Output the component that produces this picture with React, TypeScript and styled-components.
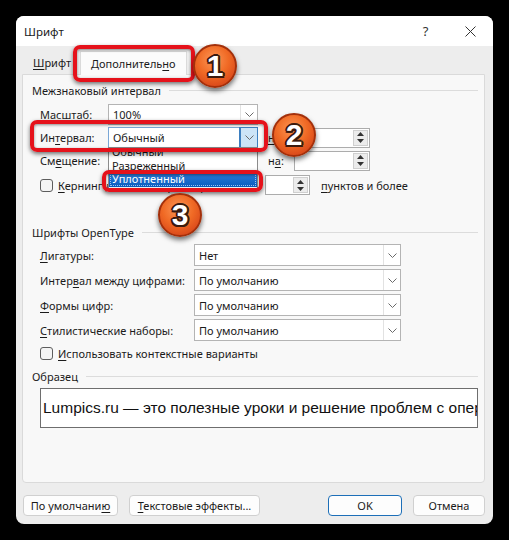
import React from 'react';
import styled, { createGlobalStyle } from 'styled-components';

const Global = createGlobalStyle`
  html, body { margin: 0; padding: 0; background: #000; }
  body { font-family: 'Noto Sans', 'Open Sans', sans-serif; }
  #root { width: 509px; height: 540px; }
`;

const Page = styled.div`
  width: 509px;
  height: 540px;
  box-sizing: border-box;
  padding: 16px;
  background: #000;
`;

const Dialog = styled.div`
  position: relative;
  width: 477px;
  height: 508px;
  background: #ededed;
  border-radius: 8px;
  overflow: hidden;
  display: flex;
  flex-direction: column;
  font-size: 11px;
  color: #1b1b1b;
`;

const TitleBar = styled.div`
  height: 30px;
  flex: none;
  background: #fff;
  display: flex;
  align-items: center;
  padding-left: 8px;
`;

const Title = styled.div`
  flex: 1;
  font-size: 11.5px;
`;

const TitleButton = styled.div`
  width: 45px;
  height: 30px;
  display: flex;
  align-items: center;
  justify-content: center;
  font-size: 13px;
  color: #333;
`;

const TabStrip = styled.div`
  height: 28px;
  flex: none;
  display: flex;
  align-items: flex-end;
  padding-left: 10px;
  gap: 2px;
  position: relative;
  z-index: 1;
`;

const Tab = styled.div<{ $active?: boolean }>`
  height: ${(p) => (p.$active ? 23 : 20)}px;
  padding: 0 ${(p) => (p.$active ? 10 : 6)}px;
  display: flex;
  align-items: center;
  background: ${(p) => (p.$active ? '#fbfbfb' : 'transparent')};
  border: ${(p) => (p.$active ? '1px solid #dadada' : '1px solid transparent')};
  border-bottom: none;
  margin-bottom: ${(p) => (p.$active ? -1 : 2)}px;
`;

const Acc = styled.span`
  text-decoration: underline;
  text-underline-offset: 2px;
`;

const Panel = styled.div`
  box-sizing: border-box;
  height: 409px;
  flex: none;
  margin: 0 8px 0 6px;
  background: #f8f8f8;
  border: 1px solid #dadada;
  border-radius: 0 0 4px 4px;
  padding: 7px 6px 0 9px;
  display: flex;
  flex-direction: column;
`;

const GroupHeader = styled.div<{ $mt?: number }>`
  display: flex;
  align-items: center;
  gap: 8px;
  height: 16px;
  margin-top: ${(p) => p.$mt ?? 0}px;
  &::after {
    content: '';
    flex: 1;
    height: 1px;
    background: #dcdcdc;
  }
`;

const Rows = styled.div<{ $mt: number; $gap: number }>`
  display: flex;
  flex-direction: column;
  gap: ${(p) => p.$gap}px;
  margin-top: ${(p) => p.$mt}px;
  padding-left: 8px;
`;

const Row = styled.div<{ $h: number }>`
  display: flex;
  align-items: center;
  height: ${(p) => p.$h}px;
`;

const Label = styled.div<{ $w: number; $ml?: number }>`
  width: ${(p) => p.$w}px;
  margin-left: ${(p) => p.$ml ?? 0}px;
  flex: none;
  white-space: nowrap;
`;

const ComboBox = styled.div<{ $w: number; $h: number; $focus?: boolean }>`
  position: relative;
  box-sizing: border-box;
  width: ${(p) => p.$w}px;
  height: ${(p) => p.$h}px;
  flex: none;
  background: #fff;
  border: 1px solid ${(p) => (p.$focus ? '#7aa7d6' : '#b4b4b4')};
  display: flex;
  align-items: center;
`;

const ComboValue = styled.div`
  flex: 1;
  padding-left: 4px;
  white-space: nowrap;
  overflow: hidden;
`;

const ComboArrow = styled.div<{ $focus?: boolean }>`
  box-sizing: border-box;
  width: 17px;
  height: 100%;
  display: flex;
  align-items: center;
  justify-content: center;
  background: ${(p) => (p.$focus ? '#cce4f7' : '#fff')};
  border-left: 1px solid ${(p) => (p.$focus ? '#3d7fc0' : '#e2e2e2')};
  outline: ${(p) => (p.$focus ? '1px solid #3d7fc0' : 'none')};
`;

const DropList = styled.div`
  position: absolute;
  top: 100%;
  left: -1px;
  right: -1px;
  height: 42px;
  box-sizing: border-box;
  background: #fff;
  border: 1px solid #8c8c8c;
  overflow: hidden;
  z-index: 3;
`;

const DropItem = styled.div<{ $h: number; $mt?: number; $sel?: boolean }>`
  height: ${(p) => p.$h}px;
  margin-top: ${(p) => p.$mt ?? 0}px;
  line-height: 14px;
  padding-left: 3px;
  overflow: hidden;
  white-space: nowrap;
  color: ${(p) => (p.$sel ? '#fff' : '#1b1b1b')};
  background: ${(p) => (p.$sel ? 'linear-gradient(#2f7fd8, #0a5cbf)' : 'transparent')};
  outline: ${(p) => (p.$sel ? '1px dotted #9cc3ee' : 'none')};
  outline-offset: -2px;
  display: flex;
  align-items: ${(p) => (p.$sel ? 'center' : 'flex-start')};
`;

const Spin = styled.div<{ $w: number }>`
  box-sizing: border-box;
  width: ${(p) => p.$w}px;
  height: 20px;
  flex: none;
  background: #fff;
  border: 1px solid #acacac;
  display: flex;
  justify-content: flex-end;
  padding: 1px;
`;

const SpinButtons = styled.div`
  width: 13px;
  display: flex;
  flex-direction: column;
  border: 1px solid #cfcfcf;
  background: #ececec;
`;

const SpinHalf = styled.div`
  flex: 1;
  display: flex;
  align-items: center;
  justify-content: center;
`;

const Check = styled.div`
  box-sizing: border-box;
  width: 13px;
  height: 13px;
  flex: none;
  border: 1px solid #5d5d5d;
  border-radius: 3px;
  background: #f4f4f4;
  margin-right: 5px;
`;

const Sample = styled.div`
  box-sizing: border-box;
  margin: 4px 0 0 8px;
  width: 438px;
  height: 40px;
  background: #fff;
  border: 1px solid #6e6e6e;
  display: flex;
  align-items: center;
  padding-left: 2px;
  overflow: hidden;
  white-space: nowrap;
  font-family: 'Liberation Sans', Arial, sans-serif;
  font-size: 15.5px;
  color: #111;
`;

const Footer = styled.div`
  flex: 1;
  display: flex;
  align-items: flex-start;
  padding: 12px 8px 0 7px;
  gap: 11px;
`;

const Button = styled.div<{ $w: number; $primary?: boolean; $push?: boolean }>`
  box-sizing: border-box;
  width: ${(p) => p.$w}px;
  height: 21px;
  display: flex;
  align-items: center;
  justify-content: center;
  background: #fdfdfd;
  border: 1px solid ${(p) => (p.$primary ? '#1d6fb8' : '#d0d0d0')};
  border-radius: 4px;
  margin-left: ${(p) => (p.$push ? 'auto' : '0')};
  white-space: nowrap;
`;

const Highlight = styled.div<{ $x: number; $y: number; $w: number; $h: number }>`
  position: absolute;
  left: ${(p) => p.$x}px;
  top: ${(p) => p.$y}px;
  width: ${(p) => p.$w}px;
  height: ${(p) => p.$h}px;
  box-sizing: border-box;
  border: 4px solid #e5121b;
  border-radius: 7px;
  box-shadow: 0 2px 4px rgba(0, 0, 0, 0.55), inset 0 1px 3px rgba(0, 0, 0, 0.45);
  z-index: 5;
  pointer-events: none;
`;

const Badge = styled.div<{ $x: number; $y: number }>`
  position: absolute;
  left: ${(p) => p.$x}px;
  top: ${(p) => p.$y}px;
  width: 44px;
  height: 44px;
  box-sizing: border-box;
  border-radius: 50%;
  border: 2px solid #a3300b;
  background: radial-gradient(circle at 45% 35%, #fb9656 0%, #f06a25 45%, #d9481a 80%, #b8360f 100%);
  box-shadow: 0 3px 5px rgba(0, 0, 0, 0.55);
  display: flex;
  align-items: center;
  justify-content: center;
  font-family: 'Liberation Sans', Arial, sans-serif;
  font-weight: 700;
  font-size: 30px;
  color: #fff;
  text-shadow: -2px 0 0 #3b1a0e, 2px 0 0 #3b1a0e, 0 -2px 0 #3b1a0e, 0 2px 0 #3b1a0e,
    -1.5px -1.5px 0 #3b1a0e, 1.5px 1.5px 0 #3b1a0e, -1.5px 1.5px 0 #3b1a0e, 1.5px -1.5px 0 #3b1a0e;
  z-index: 6;
`;

const Chevron = () => (
  <svg width="9" height="5" viewBox="0 0 9 5">
    <polyline points="0.5,0.5 4.5,4.5 8.5,0.5" fill="none" stroke="#6a6a6a" strokeWidth="1" />
  </svg>
);

const Tri = ({ up }: { up?: boolean }) => (
  <svg width="7" height="4" viewBox="0 0 7 4">
    <polygon points={up ? '0,4 3.5,0 7,4' : '0,0 3.5,4 7,0'} fill="#333" />
  </svg>
);

const Combo = ({ w, h, value, focus, children }: { w: number; h: number; value: string; focus?: boolean; children?: React.ReactNode }) => (
  <ComboBox $w={w} $h={h} $focus={focus}>
    <ComboValue>{value}</ComboValue>
    <ComboArrow $focus={focus}>
      <Chevron />
    </ComboArrow>
    {children}
  </ComboBox>
);

const SpinBox = ({ w }: { w: number }) => (
  <Spin $w={w}>
    <SpinButtons>
      <SpinHalf>
        <Tri up />
      </SpinHalf>
      <SpinHalf>
        <Tri />
      </SpinHalf>
    </SpinButtons>
  </Spin>
);

export default function App() {
  return (
    <Page>
      <Global />
      <Dialog>
        <TitleBar>
          <Title>Шрифт</Title>
          <TitleButton>?</TitleButton>
          <TitleButton>
            <svg width="11" height="11" viewBox="0 0 11 11">
              <path d="M0.5 0.5 L10.5 10.5 M10.5 0.5 L0.5 10.5" stroke="#333" strokeWidth="1" />
            </svg>
          </TitleButton>
        </TitleBar>
        <TabStrip>
          <Tab>
            <span>
              <Acc>Ш</Acc>рифт
            </span>
          </Tab>
          <Tab $active>
            <span>
              Дополнитель<Acc>н</Acc>о
            </span>
          </Tab>
        </TabStrip>
        <Panel>
          <GroupHeader>Межзнаковый интервал</GroupHeader>
          <Rows $mt={6} $gap={2}>
            <Row $h={21}>
              <Label $w={68}>Масштаб:</Label>
              <Combo w={150} h={21} value="100%" />
            </Row>
            <Row $h={21}>
              <Label $w={68}>
                Ин<Acc>т</Acc>ервал:
              </Label>
              <Combo w={150} h={21} value="Обычный" focus>
                <DropList>
                  <DropItem $h={14} $mt={-3}>Обычный</DropItem>
                  <DropItem $h={12}>Разреженный</DropItem>
                  <DropItem $h={16} $sel>
                    Уплотненный
                  </DropItem>
                </DropList>
              </Combo>
              <Label $w={26} $ml={10}>
                <Acc>н</Acc>а:
              </Label>
              <SpinBox w={76} />
            </Row>
            <Row $h={21}>
              <Label $w={68}>
                См<Acc>е</Acc>щение:
              </Label>
              <Combo w={150} h={21} value="" />
              <Label $w={26} $ml={10}>
                н<Acc>а</Acc>:
              </Label>
              <SpinBox w={76} />
            </Row>
            <Row $h={24}>
              <Check />
              <Label $w={207}>
                <Acc>К</Acc>ернинг для знаков размером:
              </Label>
              <SpinBox w={45} />
              <Label $w={120} $ml={11}>
                <Acc>п</Acc>унктов и более
              </Label>
            </Row>
          </Rows>
          <GroupHeader $mt={27}>Шрифты OpenType</GroupHeader>
          <Rows $mt={4} $gap={3}>
            <Row $h={22}>
              <Label $w={154}>
                <Acc>Л</Acc>игатуры:
              </Label>
              <Combo w={207} h={22} value="Нет" />
            </Row>
            <Row $h={22}>
              <Label $w={154}>
                Интер<Acc>в</Acc>ал между цифрами:
              </Label>
              <Combo w={207} h={22} value="По умолчанию" />
            </Row>
            <Row $h={22}>
              <Label $w={154}>
                <Acc>Ф</Acc>ормы цифр:
              </Label>
              <Combo w={207} h={22} value="По умолчанию" />
            </Row>
            <Row $h={22}>
              <Label $w={154}>
                <Acc>С</Acc>тилистические наборы:
              </Label>
              <Combo w={207} h={22} value="По умолчанию" />
            </Row>
            <Row $h={18}>
              <Check />
              <Label $w={300}>
                <Acc>И</Acc>спользовать контекстные варианты
              </Label>
            </Row>
          </Rows>
          <GroupHeader $mt={6}>Образец</GroupHeader>
          <Sample>Lumpics.ru — это полезные уроки и решение проблем с операционными системами</Sample>
        </Panel>
        <Footer>
          <Button $w={95}>
            <span>
              По умолчани<Acc>ю</Acc>
            </span>
          </Button>
          <Button $w={131}>
            <span>
              <Acc>Т</Acc>екстовые эффекты...
            </span>
          </Button>
          <Button $w={74} $primary $push>
            OK
          </Button>
          <Button $w={72}>Отмена</Button>
        </Footer>
        <Highlight $x={57} $y={29} $w={122} $h={37} />
        <Highlight $x={14} $y={104} $w={238} $h={32} />
        <Highlight $x={86} $y={154} $w={161} $h={22} />
        <Badge $x={177} $y={28}>1</Badge>
        <Badge $x={256} $y={97}>2</Badge>
        <Badge $x={142} $y={177}>3</Badge>
      </Dialog>
    </Page>
  );
}
